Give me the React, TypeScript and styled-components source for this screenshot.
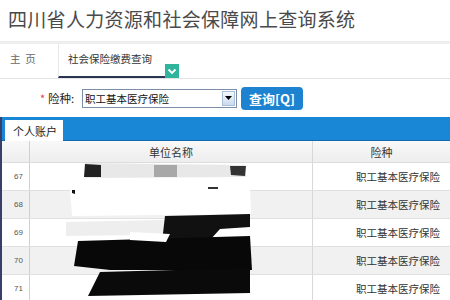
import { FC } from 'react'
import styled, { createGlobalStyle } from 'styled-components'

const GlobalStyle = createGlobalStyle`
  html, body {
    margin: 0;
    padding: 0;
    background: #fff;
    overflow: hidden;
  }
  body {
    font-family: "Noto Sans CJK SC", "Liberation Sans", sans-serif;
  }
`

const rows = [67, 68, 69, 70, 71]

const App: FC = () => {
  return (
    <Page>
      <GlobalStyle />
      <Title>四川省人力资源和社会保障网上查询系统</Title>
      <Nav>
        <NavItem>主&nbsp;&nbsp;页</NavItem>
        <ActiveTab>社会保险缴费查询</ActiveTab>
        <TabToggle>
          <svg width="10" height="7" viewBox="0 0 10 7">
            <path d="M1.5 1.5 L5 5 L8.5 1.5" stroke="#fff" strokeWidth="1.8" fill="none" />
          </svg>
        </TabToggle>
      </Nav>
      <Form>
        <Required>*</Required>
        <Label>险种:</Label>
        <Select>
          <SelectText>职工基本医疗保险</SelectText>
          <SelectArrow>
            <svg width="7" height="4" viewBox="0 0 7 4">
              <path d="M0 0 L7 0 L3.5 4 Z" fill="#000" />
            </svg>
          </SelectArrow>
        </Select>
        <QueryButton>查询[Q]</QueryButton>
      </Form>
      <Panel>
        <TabBar>
          <PanelTab>个人账户</PanelTab>
        </TabBar>
        <Table>
          <HeadRow>
            <IndexCell />
            <HeadCell>单位名称</HeadCell>
            <HeadCell>险种</HeadCell>
          </HeadRow>
          {rows.map((n, i) => (
            <Row key={n} $alt={i % 2 === 1}>
              <IndexCell>{n}</IndexCell>
              <NameCell />
              <TypeCell>职工基本医疗保险</TypeCell>
            </Row>
          ))}
          <Scribble width="200" height="140" viewBox="0 0 200 140">
            {/* redaction marks over the names */}
            <polygon points="15,1 175,3 176,15 15,16" fill="#e8e8e8" />
            <polygon points="15,2 31,3 31,15 14,15" fill="#222" />
            <polygon points="160,4 176,4 175,14 161,13" fill="#333" />
            <polygon points="84,3 107,3 107,15 84,15" fill="#a8a8a8" />
            <polygon points="0,27 180,26 181,52 2,54" fill="#fff" />
            <polygon points="2,28 5,28 5,32 2,31" fill="#111" />
            <polygon points="138,25 148,25 148,27 138,27" fill="#333" />
            <polygon points="-4,60 140,57 141,72 -4,74" fill="#eee" />
            <polygon points="95,54 140,53 180,52 180,65 150,67 140,78 92,80" fill="#111" />
            <polygon points="8,79 180,74 182,108 40,108 4,104" fill="#080808" />
            <polygon points="30,110 180,106 180,131 18,134" fill="#0a0a0a" />
            <polygon points="60,70 100,72 96,80 60,78" fill="#fff" />
          </Scribble>
        </Table>
      </Panel>
    </Page>
  )
}

const Page = styled.div`
  width: 450px;
  height: 300px;
  overflow: hidden;
  background: #fff;
`

const Title = styled.h1`
  margin: 0;
  height: 44px;
  padding: 5px 0 0 8px;
  box-sizing: border-box;
  font-size: 19px;
  font-weight: 400;
  letter-spacing: 0.3px;
  color: #4a4a4a;
  border-bottom: 3px solid #eeeeee;
`

const Nav = styled.div`
  display: flex;
  align-items: flex-start;
  height: 34px;
  border-bottom: 1px solid #e3e3e3;
`

const NavItem = styled.div`
  width: 58px;
  padding: 7px 0 0 10px;
  box-sizing: border-box;
  font-size: 10.5px;
  color: #666;
`

const ActiveTab = styled.div`
  width: 107px;
  height: 34px;
  box-sizing: border-box;
  padding: 7px 0 0 9px;
  font-size: 10.5px;
  color: #333;
  border-left: 1px solid #e8e8e8;
  border-bottom: 2px solid #2a3550;
`

const TabToggle = styled.div`
  margin-top: 20px;
  width: 14px;
  height: 14px;
  background: #2fb59b;
  display: flex;
  align-items: center;
  justify-content: center;
`

const Form = styled.div`
  display: flex;
  align-items: center;
  height: 38px;
  padding-left: 40px;
`

const Required = styled.span`
  color: #e04040;
  font-size: 11px;
  width: 8px;
`

const Label = styled.span`
  font-size: 11.5px;
  color: #222;
  width: 34px;
`

const Select = styled.div`
  display: flex;
  align-items: center;
  width: 155px;
  height: 19px;
  box-sizing: border-box;
  border: 1px solid #7a8ea8;
  background: #fff;
`

const SelectText = styled.span`
  flex: 1;
  padding-left: 2px;
  font-size: 10.5px;
  color: #111;
`

const SelectArrow = styled.div`
  width: 13px;
  height: 15px;
  margin-right: 1px;
  display: flex;
  align-items: center;
  justify-content: center;
  background: linear-gradient(#f4f8fc, #c9dbee);
  border: 1px solid #a9bfd6;
  box-sizing: border-box;
`

const QueryButton = styled.button`
  margin-left: 4px;
  width: 62px;
  height: 23px;
  border: none;
  border-radius: 4px;
  background: #1d82d0;
  color: #fff;
  font-family: "Noto Sans CJK SC", sans-serif;
  font-size: 13px;
  font-weight: 700;
  padding: 0;
`

const Panel = styled.div`
  border-left: 2px solid #38406a;
`

const TabBar = styled.div`
  height: 23px;
  background: #1a86d6;
  display: flex;
  align-items: flex-end;
  padding-left: 3px;
  border-bottom: 1px solid #1569b0;
`

const PanelTab = styled.div`
  width: 58px;
  height: 21px;
  box-sizing: border-box;
  padding: 3px 0 0 8px;
  background: #fff;
  font-size: 11px;
  color: #222;
  margin-bottom: -1px;
`

const Table = styled.div`
  position: relative;
`

const HeadRow = styled.div`
  display: grid;
  grid-template-columns: 28px 283px 1fr;
  height: 21px;
  background: linear-gradient(#f8f8f8, #eeeeee);
  border-bottom: 1px solid #dcdcdc;
`

const HeadCell = styled.div`
  font-size: 11px;
  color: #333;
  display: flex;
  align-items: center;
  justify-content: center;
  border-right: 1px solid #d8d8d8;
  &:last-child {
    border-right: none;
  }
`

const Row = styled.div<{ $alt: boolean }>`
  display: grid;
  grid-template-columns: 28px 283px 1fr;
  height: 27px;
  background: ${({ $alt }) => ($alt ? '#f1f1f1' : '#fff')};
  border-bottom: 1px solid #e0e0e0;
`

const IndexCell = styled.div`
  border-right: 1px solid #d0d0d0;
  font-family: "Liberation Sans", sans-serif;
  font-size: 8px;
  color: #555;
  display: flex;
  align-items: center;
  justify-content: flex-end;
  padding-right: 6px;
`

const NameCell = styled.div`
  border-right: 1px solid #d8d8d8;
`

const TypeCell = styled.div`
  font-size: 10.5px;
  color: #333;
  display: flex;
  align-items: center;
  justify-content: flex-end;
  padding-right: 10px;
`

const Scribble = styled.svg`
  position: absolute;
  left: 68px;
  top: 21px;
  overflow: visible;
`

export default App
